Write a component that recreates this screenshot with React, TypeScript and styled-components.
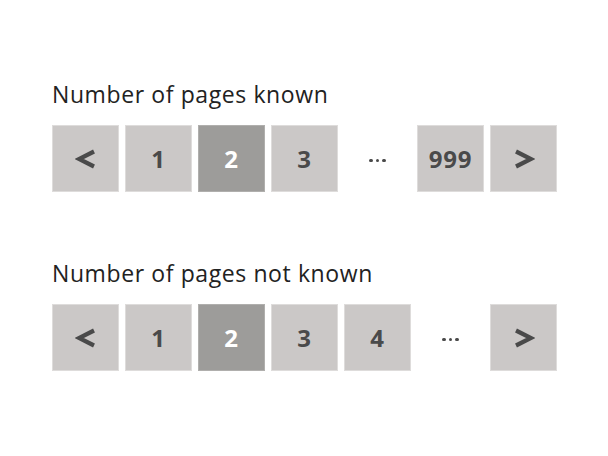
import React from "react";
import styled, { createGlobalStyle } from "styled-components";

const Global = createGlobalStyle`
  html, body { margin: 0; padding: 0; background: #ffffff; }
  body { font-family: "Open Sans", "Noto Sans", sans-serif; }
`;

const Page = styled.div`
  width: 608px;
  height: 456px;
  box-sizing: border-box;
  padding: 76px 0 0 52px;
  display: flex;
  flex-direction: column;
  gap: 63px;
`;

const Section = styled.section`
  display: flex;
  flex-direction: column;
  gap: 12px;
`;

const Title = styled.h2`
  margin: 0;
  font-family: "Open Sans", "Noto Sans", sans-serif;
  font-weight: 400;
  font-size: 23px;
  line-height: 37px;
  color: #222222;
  letter-spacing: 0.6px;
`;

const Bar = styled.nav`
  display: flex;
  gap: 6px;
`;

const Box = styled.div<{ $active?: boolean }>`
  width: 67px;
  height: 67px;
  box-sizing: border-box;
  border: 1px solid ${(p) => (p.$active ? "#b0afad" : "#dedcdb")};
  background: ${(p) => (p.$active ? "#9d9c9a" : "#cbc8c7")};
  color: ${(p) => (p.$active ? "#ffffff" : "#4a4a4a")};
  display: flex;
  align-items: center;
  justify-content: center;
  font-family: "Open Sans", "Noto Sans", sans-serif;
  font-weight: 700;
  font-size: 24px;
  letter-spacing: 0.8px;
`;

const Gap = styled.div`
  width: 67px;
  height: 67px;
  display: flex;
  align-items: center;
  justify-content: center;
  gap: 3px;
  padding-top: 4px;
  box-sizing: border-box;
`;

const Dot = styled.span`
  width: 3.5px;
  height: 3.5px;
  border-radius: 50%;
  background: #4a4a4a;
`;

const Chevron = ({ dir }: { dir: "left" | "right" }) => (
  <svg width="22" height="20" viewBox="0 0 22 20">
    <polyline
      points={dir === "left" ? "19,2.5 4,10 19,17.5" : "3,2.5 18,10 3,17.5"}
      fill="none"
      stroke="#4a4a4a"
      strokeWidth="4.2"
      strokeLinejoin="miter"
    />
  </svg>
);

const Ellipsis = () => (
  <Gap>
    <Dot />
    <Dot />
    <Dot />
  </Gap>
);

const Pager = ({ items, active }: { items: string[]; active: string }) => (
  <Bar>
    <Box>
      <Chevron dir="left" />
    </Box>
    {items.map((it, i) =>
      it === "..." ? (
        <Ellipsis key={i} />
      ) : (
        <Box key={i} $active={it === active}>
          {it}
        </Box>
      )
    )}
    <Box>
      <Chevron dir="right" />
    </Box>
  </Bar>
);

export default function App() {
  return (
    <>
      <Global />
      <Page>
        <Section>
          <Title>Number of pages known</Title>
          <Pager items={["1", "2", "3", "...", "999"]} active="2" />
        </Section>
        <Section>
          <Title>Number of pages not known</Title>
          <Pager items={["1", "2", "3", "4", "..."]} active="2" />
        </Section>
      </Page>
    </>
  );
}
